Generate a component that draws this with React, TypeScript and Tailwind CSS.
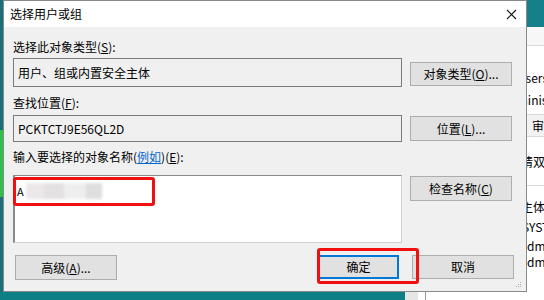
export default function App() {
  const font = { fontFamily: '"Noto Sans CJK SC", "Liberation Sans", sans-serif' };
  return (
    <div
      className="w-[544px] h-[300px] overflow-hidden flex flex-col bg-[#0f7f86] text-[12px] leading-[16px] text-black"
      style={font}
    >
      <div className="flex h-[292px]">
        {/* desktop strip at left */}
        <div className="w-[3px] flex flex-col">
          <div className="h-[130px] bg-[#1b6f7a]" />
          <div className="h-[67px] bg-[#2fbf4a]" />
          <div className="flex-1 bg-[#1b6f7a]" />
        </div>

        {/* dialog */}
        <div className="relative w-[524px] flex flex-col border border-[#8a8a8a] bg-[#f0f0f0]">
          {/* title bar */}
          <div className="h-[26px] bg-white flex items-center justify-between pl-[6px] pr-[9px]">
            <span className="text-[12px]">选择用户或组</span>
            <svg width="11" height="11" viewBox="0 0 11 11" className="mt-[1px]">
              <path d="M1 1 L10 10 M10 1 L1 10" stroke="#111" strokeWidth="1.1" />
            </svg>
          </div>

          {/* body */}
          <div className="flex-1 flex flex-col pl-[9px] pr-[12px] pt-[12px]">
            <div>
              选择此对象类型(<span className="underline">S</span>):
            </div>
            <div className="flex items-start gap-[8px] mt-[3px]">
              <div className="w-[389px] h-[29px] border border-[#7a7a7a] pl-[4px] pt-[6px]">
                用户、组或内置安全主体
              </div>
              <Btn className="mt-[4px] h-[24px]">
                对象类型(<span className="underline">O</span>)...
              </Btn>
            </div>

            <div className="mt-[8px]">
              查找位置(<span className="underline">F</span>):
            </div>
            <div className="flex items-start gap-[8px] mt-[4px]">
              <div className="w-[389px] h-[27px] border border-[#7a7a7a] pl-[4px] pt-[5px]">
                PCKTCTJ9E56QL2D
              </div>
              <Btn className="mt-[1px] h-[25px]">
                位置(<span className="underline">L</span>)...
              </Btn>
            </div>

            <div className="mt-[7px]">
              输入要选择的对象名称(
              <span className="text-[#0066cc] underline">例如</span>)(
              <span className="underline">E</span>):
            </div>
            <div className="flex items-start gap-[8px] mt-[10px]">
              <div className="relative w-[389px] h-[68px] bg-white border-t border-l-2 border-[#8a8a8a] border-r border-r-[#d0d0d0] border-b border-b-[#d0d0d0] pl-[2px] pt-[7px]">
                <div className="flex items-center">
                  <span className="text-[11px]">A</span>
                  <div className="ml-[2px] flex blur-[1.5px]">
                    <div className="w-[18px] h-[16px] bg-[#ece8ea]" />
                    <div className="w-[20px] h-[16px] bg-[#e3e1e2]" />
                    <div className="w-[22px] h-[16px] bg-[#eeeeee]" />
                    <div className="w-[16px] h-[16px] bg-[#dedede]" />
                  </div>
                </div>
              </div>
              <Btn className="mt-[1px] h-[25px]">
                检查名称(<span className="underline">C</span>)
              </Btn>
            </div>

            <div className="flex items-start mt-[12px]">
              <Btn className="w-[101px] h-[25px] ml-[2px]">
                高级(<span className="underline">A</span>)...
              </Btn>
              <div className="flex-1" />
              <button className="w-[81px] h-[24px] bg-[#e1e1e1] border-2 border-[#0078d7] flex items-center justify-center">
                确定
              </button>
              <Btn className="w-[84px] h-[24px] ml-[13px]">取消</Btn>
            </div>
          </div>

          {/* resize grip */}
          <svg width="7" height="7" viewBox="0 0 7 7" className="absolute right-[4px] bottom-[3px]">
            <rect x="5" y="1" width="1" height="1" fill="#b0b0b0" />
            <rect x="3" y="3" width="1" height="1" fill="#b0b0b0" />
            <rect x="5" y="3" width="1" height="1" fill="#b0b0b0" />
            <rect x="1" y="5" width="1" height="1" fill="#b0b0b0" />
            <rect x="3" y="5" width="1" height="1" fill="#b0b0b0" />
            <rect x="5" y="5" width="1" height="1" fill="#b0b0b0" />
          </svg>

          {/* red annotation boxes */}
          <div className="absolute left-[9px] top-[176px] w-[142px] h-[29px] border-[3px] border-[#f01010] rounded-[3px]" />
          <div className="absolute left-[313px] top-[247px] w-[102px] h-[36px] border-[3px] border-[#f01010] rounded-[3px]" />
        </div>

        {/* window behind, at right */}
        <div className="flex-1 flex flex-col bg-white overflow-hidden whitespace-nowrap">
          <div className="h-[27px] bg-[#16808a]" />
          <div className="h-[19px] border-b border-[#d9d9d9] bg-[#f7f7f7]" />
          <div className="h-[24px] shrink-0" />
          <div className="-ml-[10px]">Users</div>
          <div className="h-[6px] shrink-0" />
          <div className="-ml-[25px]">Adminis</div>
          <div className="h-[7px] shrink-0 border-b border-[#d9d9d9]" />
          <div className="h-[22px] shrink-0 flex items-center pl-[8px] border-b border-[#d9d9d9] bg-[#f2f2f2]">
            <span className="-ml-[3px]">审</span>
          </div>
          <div className="h-[17px] shrink-0" />
          <div className="-ml-[6px]">请双</div>
          <div className="h-[16px] shrink-0 border-b border-[#d9d9d9]" />
          <div className="h-[13px] shrink-0" />
          <div className="-ml-[6px]">主体</div>
          <div className="mt-[4px] -ml-[5px]">SYST</div>
          <div className="mt-[3px]">dmi</div>
          <div>dmi</div>
        </div>
      </div>

      {/* bottom strip */}
      <div className="flex h-[8px]">
        <div className="w-[405px] bg-[#0f7f86]" />
        <div className="w-[13px] bg-[#e6e6e6]" />
        <div className="w-[8px] bg-white border-r border-[#9a9a9a]" />
        <div className="flex-1 bg-white" />
      </div>
    </div>
  );
}

function Btn({ children, className = "" }: { children: React.ReactNode; className?: string }) {
  return (
    <button
      className={`w-[102px] bg-[#e1e1e1] border border-[#adadad] flex items-center justify-center ${className}`}
    >
      {children}
    </button>
  );
}
